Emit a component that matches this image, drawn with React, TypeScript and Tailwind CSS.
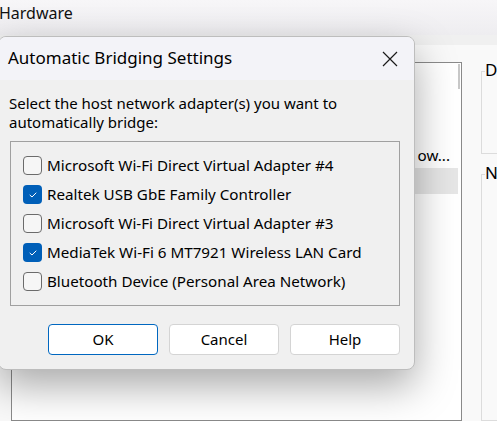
import React from "react";

const items = [
  { label: "Microsoft Wi-Fi Direct Virtual Adapter #4", checked: false },
  { label: "Realtek USB GbE Family Controller", checked: true },
  { label: "Microsoft Wi-Fi Direct Virtual Adapter #3", checked: false },
  { label: "MediaTek Wi-Fi 6 MT7921 Wireless LAN Card", checked: true },
  { label: "Bluetooth Device (Personal Area Network)", checked: false },
];

function CheckBox({ checked }: { checked: boolean }) {
  if (checked) {
    return (
      <div className="w-[19px] h-[19px] rounded-[4px] bg-[#005fb8] flex items-center justify-center shrink-0">
        <svg width="10" height="8" viewBox="0 0 10 8" fill="none">
          <path d="M2 4.2 L4 6 L8 2" stroke="white" strokeWidth="1" strokeLinecap="round" strokeLinejoin="round" />
        </svg>
      </div>
    );
  }
  return <div className="w-[19px] h-[19px] rounded-[4px] border border-[#6b6b6b] bg-[#f6f6f6] shrink-0" />;
}

export default function App() {
  return (
    <div className="relative w-[497px] h-[421px] overflow-hidden bg-[#f9f9f9] font-['Noto_Sans',sans-serif] text-[#000]">
      {/* background window */}
      <div className="h-[35px] bg-gradient-to-b from-[#f7f6f8] to-[#eeedf0] flex items-start pt-[4px]">
        <span className="text-[16px] ml-[-1px] leading-[18px] text-[#111]">Hardware</span>
      </div>
      <div className="h-[10px] bg-[#f0f0f0]" />
      <div className="flex pl-[11px] pt-[17px] gap-[19px] h-[376px] w-[497px]">
        <div className="relative w-[451px] shrink-0 h-full border border-[#8a8a8a] bg-white">
          <div className="absolute right-[1px] top-[1px] w-[2px] h-[25px] bg-[#c8c8c8]" />
          <div className="mt-[79px] h-[26px] flex items-center justify-end pr-[11px] text-[15.2px] whitespace-nowrap">
            ow...
          </div>
          <div className="h-[26px] mr-[3px] bg-[#e6e6e6]" />
        </div>
        <div className="flex flex-col gap-[20px] pt-[9px] w-[40px] shrink-0">
          <div className="relative h-[87px] border border-[#dcdcdc] border-r-0">
            <span className="absolute left-[3px] top-[-12px] bg-[#f9f9f9] text-[17px] leading-[20px] pr-[1px]">D</span>
          </div>
          <div className="relative h-[260px] border border-[#dcdcdc] border-r-0">
            <span className="absolute left-[3px] top-[-12px] bg-[#f9f9f9] text-[17px] leading-[20px] pr-[1px]">N</span>
          </div>
        </div>
      </div>

      {/* dialog */}
      <div className="absolute left-[-2px] top-[36px] w-[417px] h-[334px] rounded-[8px] border border-[#bdbdbd] bg-[#f0f0f0] shadow-[0_16px_40px_rgba(0,0,0,0.34)] overflow-hidden flex flex-col">
        <div className="h-[43px] bg-[#f3f3f8] flex items-center justify-between pl-[9px] pr-[16px] shrink-0">
          <span className="text-[17px] leading-none mt-[-2px]">Automatic Bridging Settings</span>
          <svg width="16" height="16" viewBox="0 0 16 16" fill="none">
            <path d="M1 1 L15 15 M15 1 L1 15" stroke="#1a1a1a" strokeWidth="1.2" />
          </svg>
        </div>
        <div className="pl-[10px] pr-[14px] pt-[14px] flex flex-col">
          <p className="text-[15px] leading-[19px]">
            Select the host network adapter(s) you want to
            <br />
            automatically bridge:
          </p>
          <div className="ml-[1px] mt-[9px] h-[165px] border border-[#a0a0a0] pt-[9px] pl-[12px] flex flex-col">
            {items.map((it) => (
              <div key={it.label} className="h-[29px] flex items-center gap-[5px]">
                <CheckBox checked={it.checked} />
                <span className="text-[15.2px] leading-none whitespace-nowrap">{it.label}</span>
              </div>
            ))}
          </div>
          <div className="mt-[18px] flex justify-end gap-[11px]">
            <button className="w-[110px] h-[31px] rounded-[4px] border border-[#0067c0] bg-white text-[15px]">OK</button>
            <button className="w-[110px] h-[31px] rounded-[4px] border border-[#d4d4d4] bg-white text-[15px]">Cancel</button>
            <button className="w-[110px] h-[31px] rounded-[4px] border border-[#d4d4d4] bg-white text-[15px]">Help</button>
          </div>
        </div>
      </div>
    </div>
  );
}
